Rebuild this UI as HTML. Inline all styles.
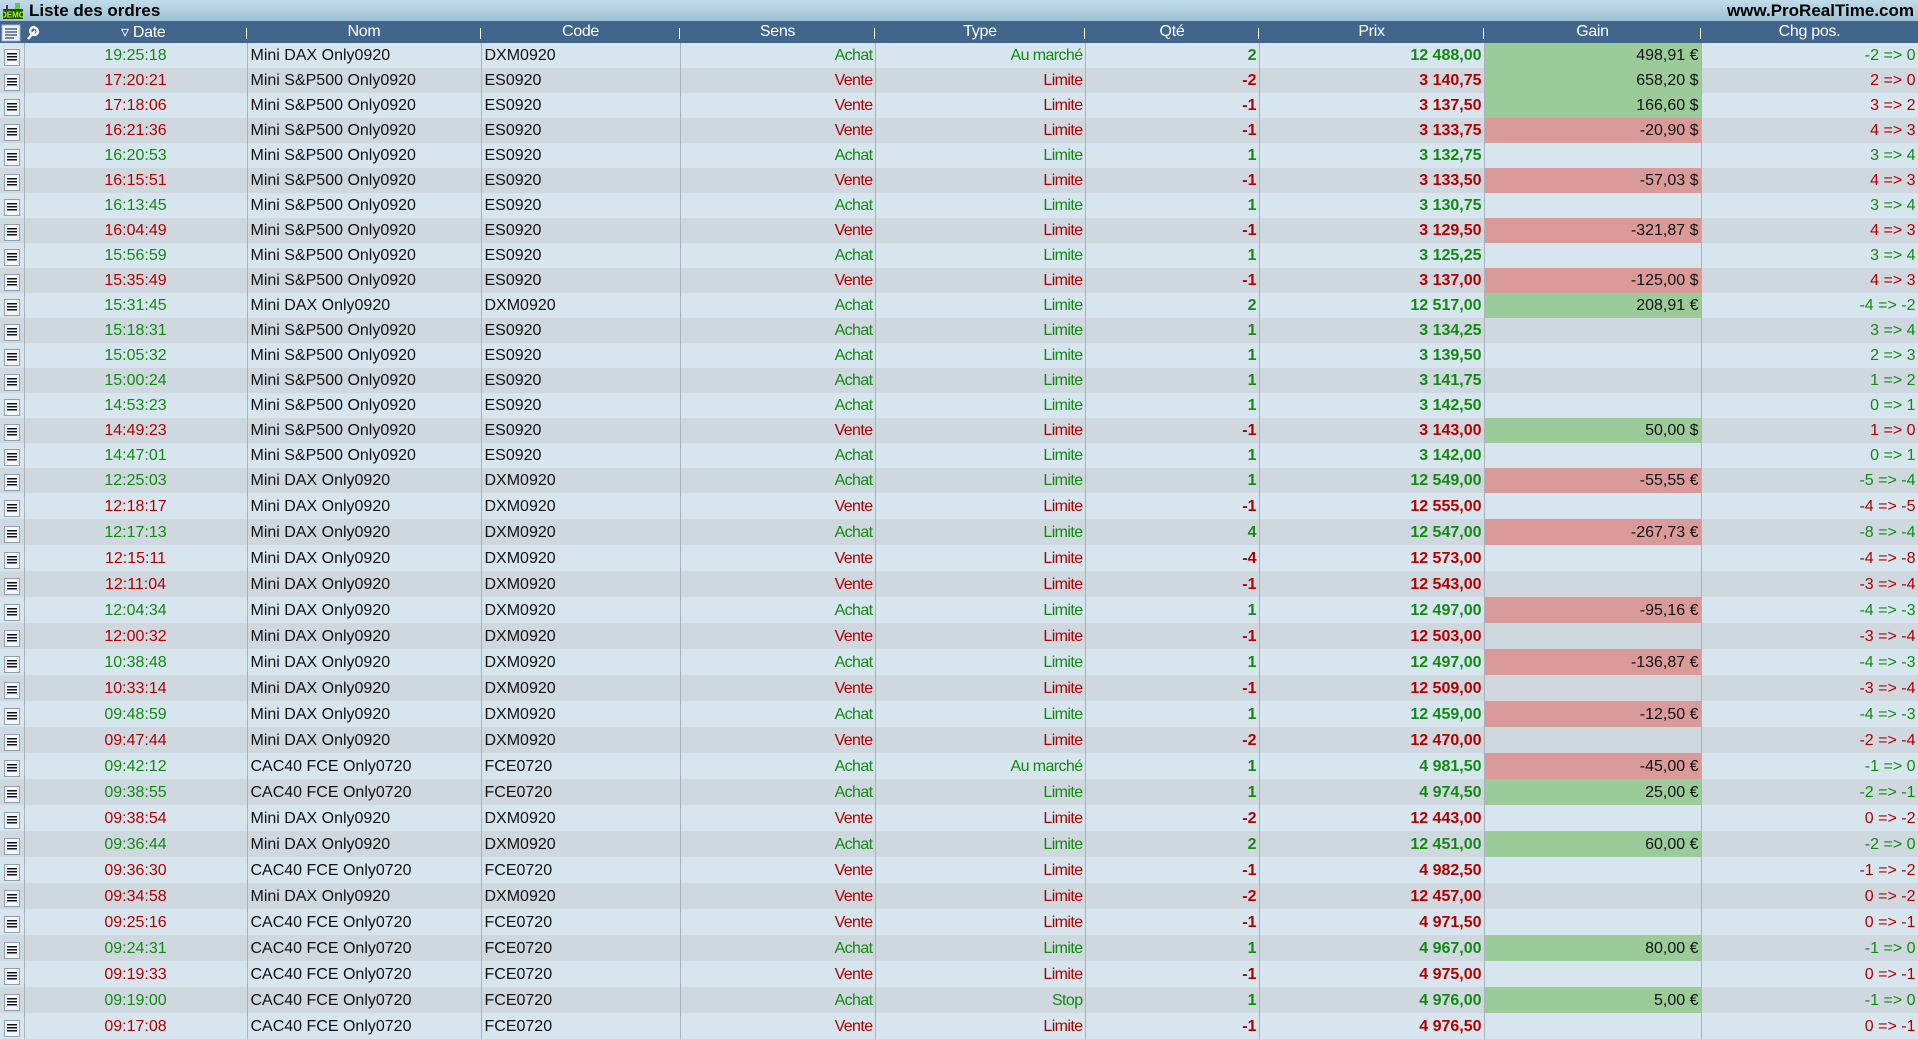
<!DOCTYPE html>
<html><head><meta charset="utf-8">
<style>
*{margin:0;padding:0;box-sizing:border-box}
body{width:1918px;height:1039px;overflow:hidden;background:#d7e6ee;font-family:"Liberation Sans",Arial,sans-serif;font-size:16px}
.top{height:21px;background:linear-gradient(#c0dcea,#9ec2d6);position:relative}
.top .t{position:absolute;left:29px;top:1px;font-weight:bold;font-size:17px;color:#000}
.top .w{position:absolute;right:4px;top:1px;font-weight:bold;font-size:17px;color:#000}
.demo{position:absolute;left:2px;top:3px;width:22px;height:16px}
table{border-collapse:collapse;table-layout:fixed;width:1918px}
th{height:22px;background:#41658b;color:#fff;font-weight:normal;font-size:16px;letter-spacing:-0.3px;position:relative;text-align:center}
th:after{content:"";position:absolute;right:0;top:7px;width:1px;height:11px;background:#fff}
th:last-child:after,th:first-child:after{display:none}
td{height:25px;border-right:1px solid #a7b2bc;white-space:nowrap;overflow:hidden;padding:0 2px;line-height:24px}
tr.b td{height:26px;line-height:25px}
tbody tr:nth-child(even) td{background:#d0d8df}
td:first-child{padding:0}
.ic{display:block;width:16px;height:17px;margin:4px 0 0 4px;background:#f4f6f8;border:1px solid #8ea0b4;position:relative}
.ic:before{content:"";position:absolute;left:2px;top:3px;width:10px;height:9px;background:repeating-linear-gradient(#111 0 1.5px,transparent 1.5px 3px)}
td:nth-child(2){text-align:center}
td:nth-child(3),td:nth-child(4){color:#111;padding-left:3px}
td:nth-child(5),td:nth-child(6){text-align:right;letter-spacing:-0.6px}
td:nth-child(7),td:nth-child(8){text-align:right;font-weight:bold}
td:nth-child(9){text-align:right;color:#111}
td:nth-child(10){text-align:right}
.g td:nth-child(2),.g td:nth-child(5),.g td:nth-child(6),.g td:nth-child(7),.g td:nth-child(8),.g td:nth-child(10){color:#128a12}
.r td:nth-child(2),.r td:nth-child(5),.r td:nth-child(6),.r td:nth-child(7),.r td:nth-child(8),.r td:nth-child(10){color:#b00000}
tbody tr td.P{background:#9bcb99!important}
tbody tr td.N{background:#da9a9a!important}
</style></head><body>
<div class="top"><svg class="demo" viewBox="0 0 22 16"><rect x="1" y="6" width="20" height="10" fill="#2a4a10"/><rect x="4" y="2" width="2" height="4" fill="#444"/><rect x="13" y="0" width="5" height="6" fill="#6c3"/><text x="11" y="14.5" font-size="8" font-family="Liberation Sans" font-weight="bold" fill="#9f3" text-anchor="middle">DEMO</text></svg><span class="t">Liste des ordres</span><span class="w">www.ProRealTime.com</span></div>
<table>
<colgroup><col style="width:24px"><col style="width:223px"><col style="width:234px"><col style="width:199px"><col style="width:195px"><col style="width:210px"><col style="width:174px"><col style="width:225px"><col style="width:217px"><col style="width:217px"></colgroup>
<thead><tr><th><svg width="22" height="20" viewBox="0 0 22 20" style="display:block;margin:1px 0 0 1px"><rect x="1" y="2" width="18" height="16" fill="#f0f4f8" stroke="#9fb0c4"/><path d="M4 6h12M4 9h12M4 12h12M4 15h9" stroke="#41658b" stroke-width="1.5"/></svg></th><th style="text-align:left"><span style="position:absolute;left:2px;top:2px;width:14px;height:18px"><svg width="16" height="18" viewBox="0 0 16 18"><path d="M2 16 L9 8 M8 4 A4 4 0 1 0 12 9 L11 6 Z" stroke="#fff" stroke-width="2.4" fill="none"/></svg></span><span style="margin-left:97px">&#9663; Date</span></th><th>Nom</th><th>Code</th><th>Sens</th><th>Type</th><th>Qté</th><th>Prix</th><th>Gain</th><th>Chg pos.</th></tr></thead>
<tbody>
<tr class="g"><td><i class="ic"></i></td><td>19:25:18</td><td>Mini DAX Only0920</td><td>DXM0920</td><td>Achat</td><td>Au marché</td><td>2</td><td>12 488,00</td><td class="P">498,91 €</td><td>-2 =&gt; 0</td></tr>
<tr class="r"><td><i class="ic"></i></td><td>17:20:21</td><td>Mini S&amp;P500 Only0920</td><td>ES0920</td><td>Vente</td><td>Limite</td><td>-2</td><td>3 140,75</td><td class="P">658,20 $</td><td>2 =&gt; 0</td></tr>
<tr class="r"><td><i class="ic"></i></td><td>17:18:06</td><td>Mini S&amp;P500 Only0920</td><td>ES0920</td><td>Vente</td><td>Limite</td><td>-1</td><td>3 137,50</td><td class="P">166,60 $</td><td>3 =&gt; 2</td></tr>
<tr class="r"><td><i class="ic"></i></td><td>16:21:36</td><td>Mini S&amp;P500 Only0920</td><td>ES0920</td><td>Vente</td><td>Limite</td><td>-1</td><td>3 133,75</td><td class="N">-20,90 $</td><td>4 =&gt; 3</td></tr>
<tr class="g"><td><i class="ic"></i></td><td>16:20:53</td><td>Mini S&amp;P500 Only0920</td><td>ES0920</td><td>Achat</td><td>Limite</td><td>1</td><td>3 132,75</td><td></td><td>3 =&gt; 4</td></tr>
<tr class="r"><td><i class="ic"></i></td><td>16:15:51</td><td>Mini S&amp;P500 Only0920</td><td>ES0920</td><td>Vente</td><td>Limite</td><td>-1</td><td>3 133,50</td><td class="N">-57,03 $</td><td>4 =&gt; 3</td></tr>
<tr class="g"><td><i class="ic"></i></td><td>16:13:45</td><td>Mini S&amp;P500 Only0920</td><td>ES0920</td><td>Achat</td><td>Limite</td><td>1</td><td>3 130,75</td><td></td><td>3 =&gt; 4</td></tr>
<tr class="r"><td><i class="ic"></i></td><td>16:04:49</td><td>Mini S&amp;P500 Only0920</td><td>ES0920</td><td>Vente</td><td>Limite</td><td>-1</td><td>3 129,50</td><td class="N">-321,87 $</td><td>4 =&gt; 3</td></tr>
<tr class="g"><td><i class="ic"></i></td><td>15:56:59</td><td>Mini S&amp;P500 Only0920</td><td>ES0920</td><td>Achat</td><td>Limite</td><td>1</td><td>3 125,25</td><td></td><td>3 =&gt; 4</td></tr>
<tr class="r"><td><i class="ic"></i></td><td>15:35:49</td><td>Mini S&amp;P500 Only0920</td><td>ES0920</td><td>Vente</td><td>Limite</td><td>-1</td><td>3 137,00</td><td class="N">-125,00 $</td><td>4 =&gt; 3</td></tr>
<tr class="g"><td><i class="ic"></i></td><td>15:31:45</td><td>Mini DAX Only0920</td><td>DXM0920</td><td>Achat</td><td>Limite</td><td>2</td><td>12 517,00</td><td class="P">208,91 €</td><td>-4 =&gt; -2</td></tr>
<tr class="g"><td><i class="ic"></i></td><td>15:18:31</td><td>Mini S&amp;P500 Only0920</td><td>ES0920</td><td>Achat</td><td>Limite</td><td>1</td><td>3 134,25</td><td></td><td>3 =&gt; 4</td></tr>
<tr class="g"><td><i class="ic"></i></td><td>15:05:32</td><td>Mini S&amp;P500 Only0920</td><td>ES0920</td><td>Achat</td><td>Limite</td><td>1</td><td>3 139,50</td><td></td><td>2 =&gt; 3</td></tr>
<tr class="g"><td><i class="ic"></i></td><td>15:00:24</td><td>Mini S&amp;P500 Only0920</td><td>ES0920</td><td>Achat</td><td>Limite</td><td>1</td><td>3 141,75</td><td></td><td>1 =&gt; 2</td></tr>
<tr class="g"><td><i class="ic"></i></td><td>14:53:23</td><td>Mini S&amp;P500 Only0920</td><td>ES0920</td><td>Achat</td><td>Limite</td><td>1</td><td>3 142,50</td><td></td><td>0 =&gt; 1</td></tr>
<tr class="r"><td><i class="ic"></i></td><td>14:49:23</td><td>Mini S&amp;P500 Only0920</td><td>ES0920</td><td>Vente</td><td>Limite</td><td>-1</td><td>3 143,00</td><td class="P">50,00 $</td><td>1 =&gt; 0</td></tr>
<tr class="g"><td><i class="ic"></i></td><td>14:47:01</td><td>Mini S&amp;P500 Only0920</td><td>ES0920</td><td>Achat</td><td>Limite</td><td>1</td><td>3 142,00</td><td></td><td>0 =&gt; 1</td></tr>
<tr class="g"><td><i class="ic"></i></td><td>12:25:03</td><td>Mini DAX Only0920</td><td>DXM0920</td><td>Achat</td><td>Limite</td><td>1</td><td>12 549,00</td><td class="N">-55,55 €</td><td>-5 =&gt; -4</td></tr>
<tr class="r b"><td><i class="ic"></i></td><td>12:18:17</td><td>Mini DAX Only0920</td><td>DXM0920</td><td>Vente</td><td>Limite</td><td>-1</td><td>12 555,00</td><td></td><td>-4 =&gt; -5</td></tr>
<tr class="g b"><td><i class="ic"></i></td><td>12:17:13</td><td>Mini DAX Only0920</td><td>DXM0920</td><td>Achat</td><td>Limite</td><td>4</td><td>12 547,00</td><td class="N">-267,73 €</td><td>-8 =&gt; -4</td></tr>
<tr class="r b"><td><i class="ic"></i></td><td>12:15:11</td><td>Mini DAX Only0920</td><td>DXM0920</td><td>Vente</td><td>Limite</td><td>-4</td><td>12 573,00</td><td></td><td>-4 =&gt; -8</td></tr>
<tr class="r b"><td><i class="ic"></i></td><td>12:11:04</td><td>Mini DAX Only0920</td><td>DXM0920</td><td>Vente</td><td>Limite</td><td>-1</td><td>12 543,00</td><td></td><td>-3 =&gt; -4</td></tr>
<tr class="g b"><td><i class="ic"></i></td><td>12:04:34</td><td>Mini DAX Only0920</td><td>DXM0920</td><td>Achat</td><td>Limite</td><td>1</td><td>12 497,00</td><td class="N">-95,16 €</td><td>-4 =&gt; -3</td></tr>
<tr class="r b"><td><i class="ic"></i></td><td>12:00:32</td><td>Mini DAX Only0920</td><td>DXM0920</td><td>Vente</td><td>Limite</td><td>-1</td><td>12 503,00</td><td></td><td>-3 =&gt; -4</td></tr>
<tr class="g b"><td><i class="ic"></i></td><td>10:38:48</td><td>Mini DAX Only0920</td><td>DXM0920</td><td>Achat</td><td>Limite</td><td>1</td><td>12 497,00</td><td class="N">-136,87 €</td><td>-4 =&gt; -3</td></tr>
<tr class="r b"><td><i class="ic"></i></td><td>10:33:14</td><td>Mini DAX Only0920</td><td>DXM0920</td><td>Vente</td><td>Limite</td><td>-1</td><td>12 509,00</td><td></td><td>-3 =&gt; -4</td></tr>
<tr class="g b"><td><i class="ic"></i></td><td>09:48:59</td><td>Mini DAX Only0920</td><td>DXM0920</td><td>Achat</td><td>Limite</td><td>1</td><td>12 459,00</td><td class="N">-12,50 €</td><td>-4 =&gt; -3</td></tr>
<tr class="r b"><td><i class="ic"></i></td><td>09:47:44</td><td>Mini DAX Only0920</td><td>DXM0920</td><td>Vente</td><td>Limite</td><td>-2</td><td>12 470,00</td><td></td><td>-2 =&gt; -4</td></tr>
<tr class="g b"><td><i class="ic"></i></td><td>09:42:12</td><td>CAC40 FCE Only0720</td><td>FCE0720</td><td>Achat</td><td>Au marché</td><td>1</td><td>4 981,50</td><td class="N">-45,00 €</td><td>-1 =&gt; 0</td></tr>
<tr class="g b"><td><i class="ic"></i></td><td>09:38:55</td><td>CAC40 FCE Only0720</td><td>FCE0720</td><td>Achat</td><td>Limite</td><td>1</td><td>4 974,50</td><td class="P">25,00 €</td><td>-2 =&gt; -1</td></tr>
<tr class="r b"><td><i class="ic"></i></td><td>09:38:54</td><td>Mini DAX Only0920</td><td>DXM0920</td><td>Vente</td><td>Limite</td><td>-2</td><td>12 443,00</td><td></td><td>0 =&gt; -2</td></tr>
<tr class="g b"><td><i class="ic"></i></td><td>09:36:44</td><td>Mini DAX Only0920</td><td>DXM0920</td><td>Achat</td><td>Limite</td><td>2</td><td>12 451,00</td><td class="P">60,00 €</td><td>-2 =&gt; 0</td></tr>
<tr class="r b"><td><i class="ic"></i></td><td>09:36:30</td><td>CAC40 FCE Only0720</td><td>FCE0720</td><td>Vente</td><td>Limite</td><td>-1</td><td>4 982,50</td><td></td><td>-1 =&gt; -2</td></tr>
<tr class="r b"><td><i class="ic"></i></td><td>09:34:58</td><td>Mini DAX Only0920</td><td>DXM0920</td><td>Vente</td><td>Limite</td><td>-2</td><td>12 457,00</td><td></td><td>0 =&gt; -2</td></tr>
<tr class="r b"><td><i class="ic"></i></td><td>09:25:16</td><td>CAC40 FCE Only0720</td><td>FCE0720</td><td>Vente</td><td>Limite</td><td>-1</td><td>4 971,50</td><td></td><td>0 =&gt; -1</td></tr>
<tr class="g b"><td><i class="ic"></i></td><td>09:24:31</td><td>CAC40 FCE Only0720</td><td>FCE0720</td><td>Achat</td><td>Limite</td><td>1</td><td>4 967,00</td><td class="P">80,00 €</td><td>-1 =&gt; 0</td></tr>
<tr class="r b"><td><i class="ic"></i></td><td>09:19:33</td><td>CAC40 FCE Only0720</td><td>FCE0720</td><td>Vente</td><td>Limite</td><td>-1</td><td>4 975,00</td><td></td><td>0 =&gt; -1</td></tr>
<tr class="g b"><td><i class="ic"></i></td><td>09:19:00</td><td>CAC40 FCE Only0720</td><td>FCE0720</td><td>Achat</td><td>Stop</td><td>1</td><td>4 976,00</td><td class="P">5,00 €</td><td>-1 =&gt; 0</td></tr>
<tr class="r b"><td><i class="ic"></i></td><td>09:17:08</td><td>CAC40 FCE Only0720</td><td>FCE0720</td><td>Vente</td><td>Limite</td><td>-1</td><td>4 976,50</td><td></td><td>0 =&gt; -1</td></tr>
</tbody></table>
</body></html>
